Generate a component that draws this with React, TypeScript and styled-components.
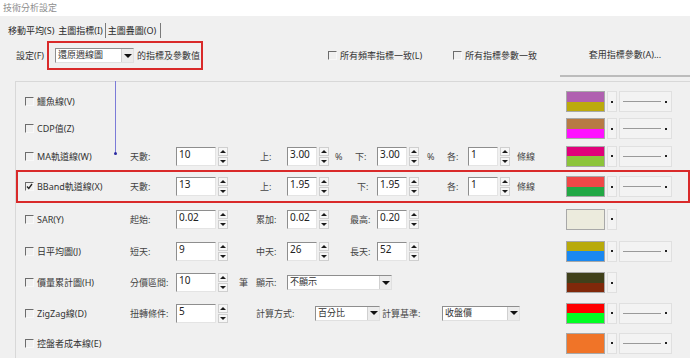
import React from 'react';
import styled, { createGlobalStyle } from 'styled-components';

const GlobalStyle = createGlobalStyle`
  html, body {
    margin: 0;
    padding: 0;
    background: #f0f0f0;
  }
  body {
    font-family: 'Noto Sans', 'Noto Sans CJK TC', sans-serif;
    font-size: 9px;
    color: #333;
  }
  * {
    box-sizing: border-box;
  }
`;

type NumProps = { value: string; w: number };

const NumField: React.FC<NumProps> = ({ value, w }) => (
  <SpinWrap>
    <NumInput $w={w}>{value}</NumInput>
    <Spinner>
      <SpinHalf>
        <UpArrow />
      </SpinHalf>
      <SpinHalf>
        <DownArrow />
      </SpinHalf>
    </Spinner>
  </SpinWrap>
);

type ComboProps = { value: string; w: number };

const Combo: React.FC<ComboProps> = ({ value, w }) => (
  <ComboBox $w={w}>
    <ComboText>{value}</ComboText>
    <ComboBtn>
      <ComboArrow />
    </ComboBtn>
  </ComboBox>
);

type ColorProps = { top: string; bottom?: string; line?: boolean };

const ColorPick: React.FC<ColorProps> = ({ top, bottom, line }) => (
  <ColorGroup>
    <Swatch>
      <SwatchHalf $c={top} />
      <SwatchHalf $c={bottom ?? top} />
    </Swatch>
    <DropBtn>
      <Dot />
    </DropBtn>
    {line && (
      <LineBtn>
        <LineStroke />
        <Dot />
      </LineBtn>
    )}
  </ColorGroup>
);

const Check: React.FC<{ label: string; checked?: boolean }> = ({ label, checked }) => (
  <CheckCell>
    <CheckBox>
      {checked && (
        <svg width="7" height="7" viewBox="0 0 7 7">
          <polyline points="1,3.5 2.8,5.5 6,1" fill="none" stroke="#222" strokeWidth="1.3" />
        </svg>
      )}
    </CheckBox>
    <span>{label}</span>
  </CheckCell>
);

const App: React.FC = () => {
  return (
    <>
      <GlobalStyle />
      <Window>
        <TitleBar>技術分析設定</TitleBar>
        <TabStrip>
          <Tab>移動平均(S)</Tab>
          <Tab $divider>主圖指標(I)</Tab>
          <Tab $divider $last>主圖疊圖(O)</Tab>
        </TabStrip>

        <SettingsRow>
          <SettingLabel>設定(F)</SettingLabel>
          <Highlight>
            <Combo value="還原週線圖" w={79} />
            <HighlightText>的指標及參數值</HighlightText>
          </Highlight>
          <CheckOption $w={125} $ml={125}>
            <CheckBox />
            <span>所有頻率指標一致(L)</span>
          </CheckOption>
          <CheckOption $w={107}>
            <CheckBox />
            <span>所有指標參數一致</span>
          </CheckOption>
          <ApplyButton>套用指標參數(A)...</ApplyButton>
        </SettingsRow>

        <Panel>
          <Pointer />

          <Row $h={27}>
            <Check label="鱷魚線(V)" />
            <ColorPick top="#b060b0" bottom="#bcaa0c" line />
          </Row>

          <Row $h={27}>
            <Check label="CDP值(Z)" />
            <ColorPick top="#b87a44" bottom="#ff10ff" line />
          </Row>

          <Row $h={28}>
            <Check label="MA軌道線(W)" />
            <Label $w={46}>天數:</Label>
            <NumField value="10" w={40} />
            <Label $w={59} $pl={32}>上:</Label>
            <NumField value="3.00" w={30} />
            <Label $w={20} $pl={6}>%</Label>
            <Label $w={28} $pl={6}>下:</Label>
            <NumField value="3.00" w={30} />
            <Label $w={22} $pl={8}>%</Label>
            <Label $w={27} $pl={6}>各:</Label>
            <NumField value="1" w={30} />
            <Label $w={30} $pl={7}>條線</Label>
            <ColorPick top="#e0007a" bottom="#8cc43a" line />
          </Row>

          <Row $h={33} $marked>
            <Check label="BBand軌道線(X)" checked />
            <Label $w={46}>天數:</Label>
            <NumField value="13" w={40} />
            <Label $w={59} $pl={32}>上:</Label>
            <NumField value="1.95" w={30} />
            <Label $w={48} $pl={28}>下:</Label>
            <NumField value="1.95" w={30} />
            <Label $w={49} $pl={28}>各:</Label>
            <NumField value="1" w={30} />
            <Label $w={30} $pl={7}>條線</Label>
            <ColorPick top="#f04848" bottom="#22a845" line />
          </Row>

          <Row $h={32}>
            <Check label="SAR(Y)" />
            <Label $w={46}>起始:</Label>
            <NumField value="0.02" w={40} />
            <Label $w={59} $pl={28}>累加:</Label>
            <NumField value="0.02" w={30} />
            <Label $w={48} $pl={21}>最高:</Label>
            <NumField value="0.20" w={30} />
            <ColorPick top="#ecebdd" />
          </Row>

          <Row $h={32}>
            <Check label="日平均圖(J)" />
            <Label $w={46}>短天:</Label>
            <NumField value="9" w={40} />
            <Label $w={59} $pl={28}>中天:</Label>
            <NumField value="26" w={30} />
            <Label $w={48} $pl={21}>長天:</Label>
            <NumField value="52" w={30} />
            <ColorPick top="#b8aa0a" bottom="#1a88f0" line />
          </Row>

          <Row $h={31}>
            <Check label="價量累計圖(H)" />
            <Label $w={46}>分價區間:</Label>
            <NumField value="10" w={40} />
            <Label $w={28} $pl={11}>筆</Label>
            <Label $w={31}>顯示:</Label>
            <Combo value="不顯示" w={105} />
            <ColorPick top="#40401a" bottom="#80280a" />
          </Row>

          <Row $h={30}>
            <Check label="ZigZag線(D)" />
            <Label $w={46}>扭轉條件:</Label>
            <NumField value="5" w={40} />
            <Label $w={87} $pl={28}>計算方式:</Label>
            <Combo value="百分比" w={65} />
            <Label $w={62} $pl={2}>計算基準:</Label>
            <Combo value="收盤價" w={78} />
            <ColorPick top="#ff0000" bottom="#00ff22" line />
          </Row>

          <Row $h={30}>
            <Check label="控盤者成本線(E)" />
            <ColorPick top="#f07428" line />
          </Row>
        </Panel>
      </Window>
    </>
  );
};

const Window = styled.div`
  width: 690px;
  height: 358px;
  overflow: hidden;
  background: #f0f0f0;
`;

const TitleBar = styled.div`
  height: 16px;
  line-height: 16px;
  padding-left: 3px;
  background: #fff;
  color: #8e8e8e;
`;

const TabStrip = styled.div`
  display: flex;
  height: 23px;
  padding: 7px 0 0 6px;
`;

const Tab = styled.div<{ $divider?: boolean; $last?: boolean }>`
  height: 15px;
  line-height: 15px;
  padding: 0 ${({ $last }) => ($last ? 4 : 2)}px 0 2px;
  color: #2a2a2a;
  border-right: ${({ $divider }) => ($divider ? '1px solid #7a7a7a' : 'none')};
`;

const SettingsRow = styled.div`
  display: flex;
  align-items: center;
  height: 29px;
  margin-top: 2px;
  padding-left: 16px;
`;

const SettingLabel = styled.span`
  width: 31px;
  color: #333;
`;

const Highlight = styled.div`
  display: flex;
  align-items: center;
  width: 156px;
  height: 29px;
  padding: 0 6px;
  border: 2px solid #d92a2a;
`;

const HighlightText = styled.span`
  margin-left: 3px;
  white-space: nowrap;
`;

const CheckOption = styled.div<{ $w: number; $ml?: number }>`
  display: flex;
  align-items: center;
  gap: 3px;
  width: ${({ $w }) => $w}px;
  margin-left: ${({ $ml }) => $ml ?? 0}px;
  white-space: nowrap;
  color: #333;
`;

const ApplyButton = styled.div`
  align-self: flex-start;
  width: 130px;
  height: 36px;
  padding-top: 7px;
  line-height: 14px;
  text-align: center;
  color: #333;
  border-bottom: 2px solid #bcbcbc;
`;

const Panel = styled.div`
  position: relative;
  margin: 11px 0 0 15px;
  padding-top: 6px;
  border-top: 1px solid #d8d8d8;
  border-left: 1px solid #d8d8d8;
`;

const Pointer = styled.div`
  position: absolute;
  left: 99px;
  top: -1px;
  width: 1px;
  height: 72px;
  background: #7b7bd8;
  &::after {
    content: '';
    position: absolute;
    left: -1px;
    bottom: -2px;
    width: 3px;
    height: 3px;
    border-radius: 50%;
    background: #2a2aa0;
  }
`;

const Row = styled.div<{ $h: number; $marked?: boolean }>`
  display: flex;
  align-items: center;
  height: ${({ $h }) => $h}px;
  padding: 0 18px 0 9px;
  box-shadow: ${({ $marked }) => ($marked ? 'inset 0 0 0 2px #d92a2a' : 'none')};
  white-space: nowrap;
`;

const CheckCell = styled.div`
  display: flex;
  align-items: center;
  gap: 3px;
  width: 105px;
  flex-shrink: 0;
  color: #333;
`;

const CheckBox = styled.span`
  display: inline-flex;
  align-items: center;
  justify-content: center;
  width: 9px;
  height: 9px;
  flex-shrink: 0;
  border-top: 1px solid #6c6c6c;
  border-left: 1px solid #6c6c6c;
  border-right: 1px solid #f8f8f8;
  border-bottom: 1px solid #f8f8f8;
`;

const Label = styled.span<{ $w: number; $pl?: number }>`
  width: ${({ $w }) => $w}px;
  padding-left: ${({ $pl }) => $pl ?? 0}px;
  flex-shrink: 0;
  color: #444;
`;

const SpinWrap = styled.div`
  display: flex;
  gap: 2px;
  height: 19px;
  flex-shrink: 0;
`;

const NumInput = styled.div<{ $w: number }>`
  width: ${({ $w }) => $w}px;
  height: 19px;
  padding: 0 2px;
  line-height: 13px;
  font-size: 10px;
  color: #222;
  background: #fff;
  border-top: 1px solid #8e8e8e;
  border-left: 1px solid #8e8e8e;
  border-right: 1px solid #e4e4e4;
  border-bottom: 1px solid #e4e4e4;
`;

const Spinner = styled.div`
  display: flex;
  flex-direction: column;
  width: 10px;
  height: 19px;
  gap: 1px;
`;

const SpinHalf = styled.div`
  flex: 1;
  display: flex;
  align-items: center;
  justify-content: center;
  background: #f6f6f6;
  border: 1px solid #cfcfcf;
`;

const UpArrow = styled.span`
  width: 0;
  height: 0;
  border-left: 3px solid transparent;
  border-right: 3px solid transparent;
  border-bottom: 3px solid #1a1a1a;
`;

const DownArrow = styled.span`
  width: 0;
  height: 0;
  border-left: 3px solid transparent;
  border-right: 3px solid transparent;
  border-top: 3px solid #1a1a1a;
`;

const ComboBox = styled.div<{ $w: number }>`
  display: flex;
  width: ${({ $w }) => $w}px;
  height: 15px;
  flex-shrink: 0;
  background: #fff;
  border-top: 1px solid #8e8e8e;
  border-left: 1px solid #8e8e8e;
  border-right: 1px solid #e0e0e0;
  border-bottom: 1px solid #e0e0e0;
`;

const ComboText = styled.span`
  flex: 1;
  padding-left: 2px;
  line-height: 12px;
  color: #333;
  overflow: hidden;
`;

const ComboBtn = styled.span`
  display: flex;
  align-items: center;
  justify-content: center;
  width: 12px;
  background: #ececec;
  border-left: 1px solid #d0d0d0;
`;

const ComboArrow = styled.span`
  width: 0;
  height: 0;
  border-left: 4px solid transparent;
  border-right: 4px solid transparent;
  border-top: 4px solid #111;
`;

const ColorGroup = styled.div`
  display: flex;
  gap: 2px;
  width: 106px;
  margin-left: auto;
  flex-shrink: 0;
`;

const Swatch = styled.div`
  display: flex;
  flex-direction: column;
  width: 39px;
  height: 21px;
  border: 1px solid #a8a8a8;
`;

const SwatchHalf = styled.div<{ $c: string }>`
  flex: 1;
  background: ${({ $c }) => $c};
`;

const DropBtn = styled.div`
  display: flex;
  align-items: center;
  justify-content: center;
  width: 10px;
  height: 21px;
  background: #f3f3f3;
  border: 1px solid #e0e0e0;
`;

const LineBtn = styled.div`
  display: flex;
  align-items: center;
  gap: 4px;
  width: 53px;
  height: 21px;
  padding: 0 4px 0 3px;
  background: #f3f3f3;
  border: 1px solid #e0e0e0;
`;

const LineStroke = styled.span`
  flex: 1;
  height: 1px;
  background: #9a9a9a;
`;

const Dot = styled.span`
  width: 2px;
  height: 2px;
  background: #222;
`;

export default App;
